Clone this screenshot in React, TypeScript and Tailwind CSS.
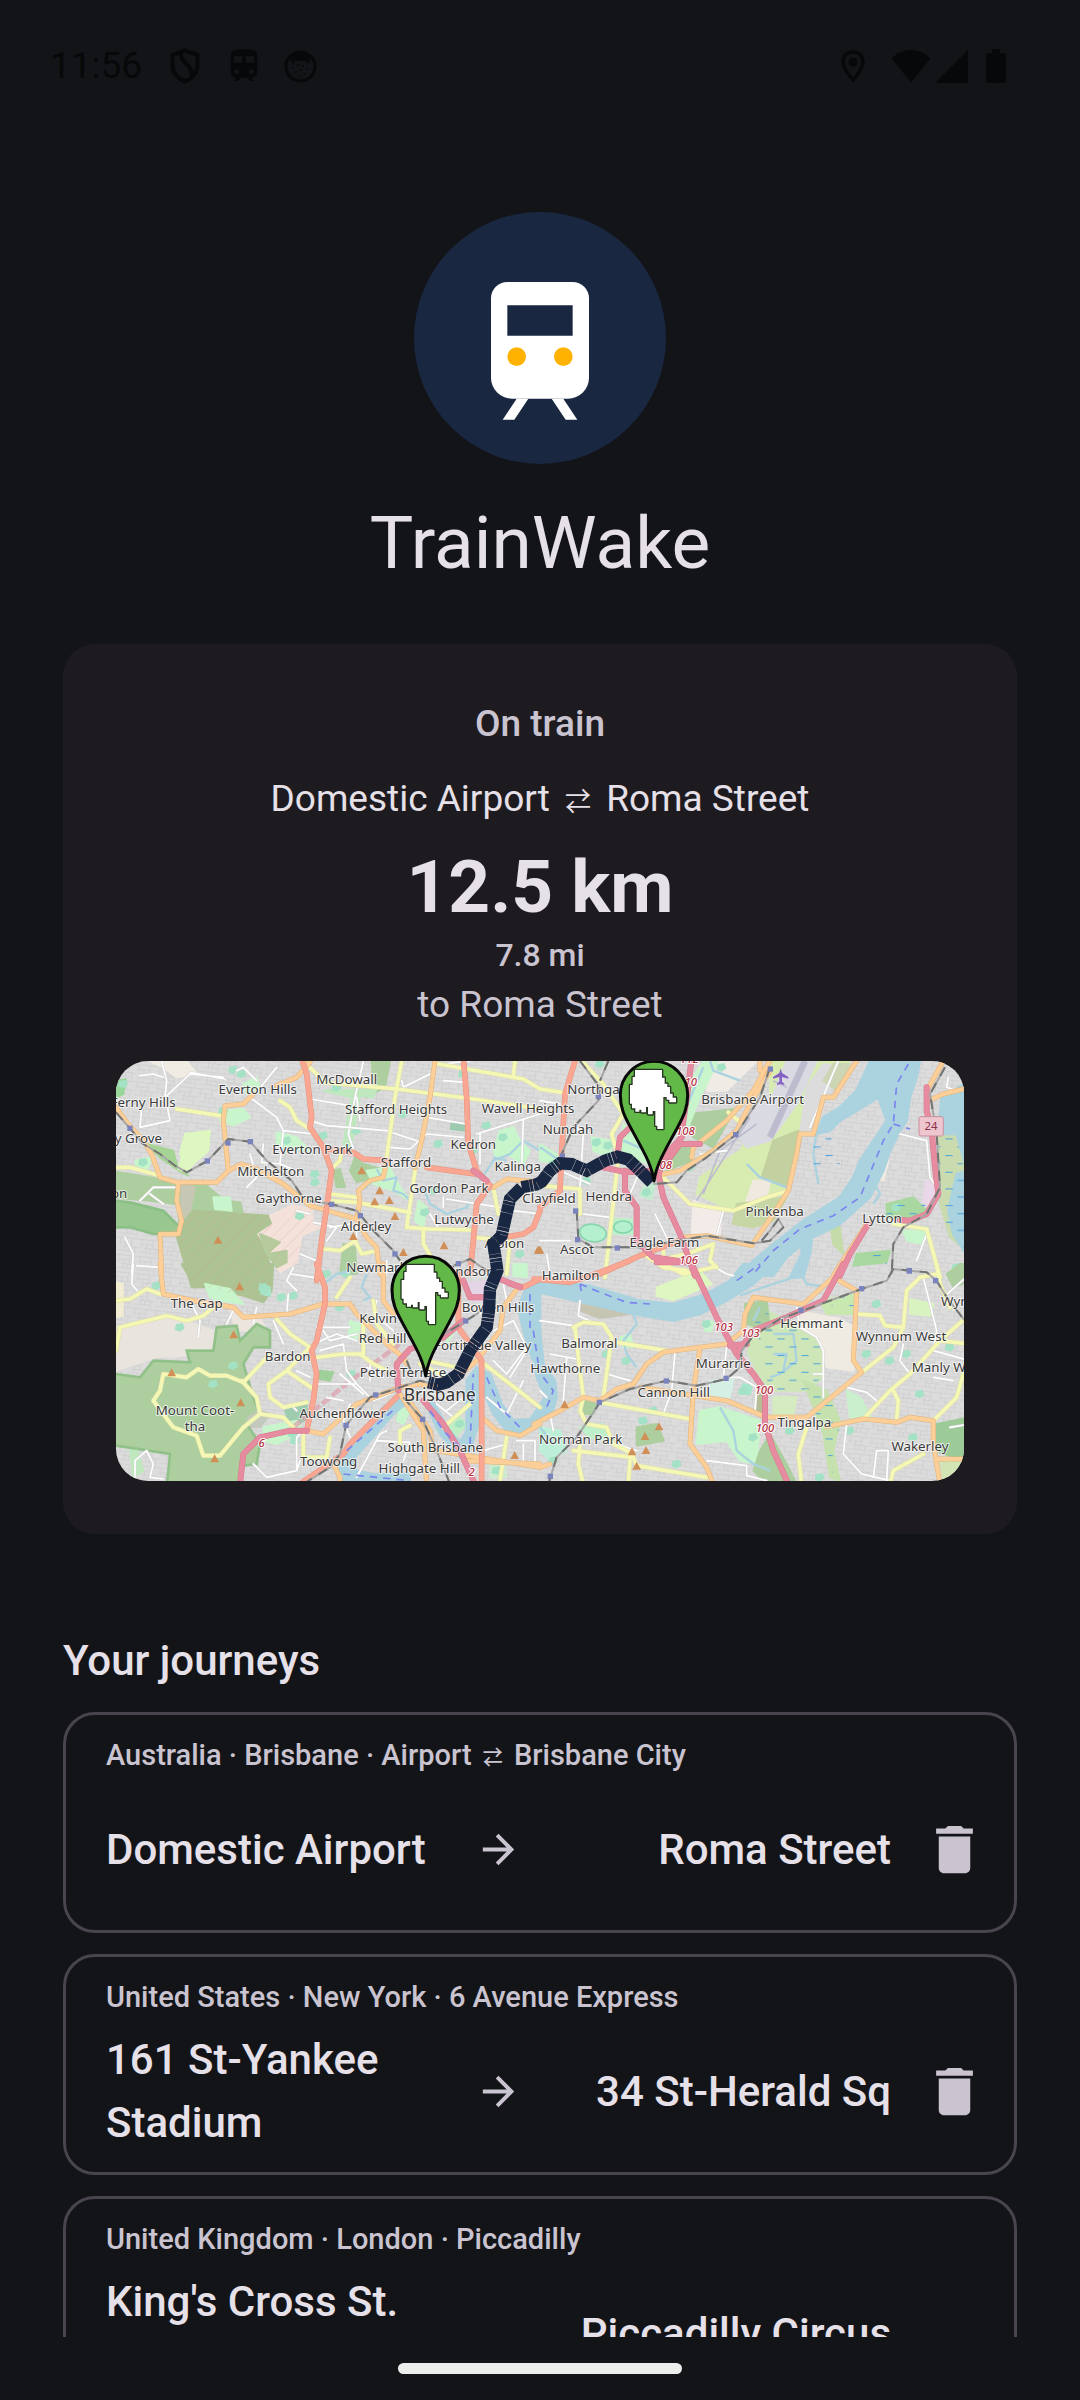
import { MdArrowForward, MdDelete, MdTrain } from "react-icons/md";

type Kind = "motorway" | "trunk" | "primary" | "secondary" | "street";

interface Tile {
  at: string;
  areas: [string, string][];
  water?: string[];
  creeks?: string;
  roads: Record<Kind, string>;
  rail: string;
  ferry?: string;
  stations: [number, number][];
  peaks: [number, number][];
  trees: [number, number][];
  labels: [string, number, number, ("start" | "middle" | "end")?][];
  refs: [string, number, number][];
}

const FOREST = "#adcf9f";
const PARK = "#c8f5cc";
const GOLF = "#def6c0";
const WATER = "#aad3df";

const roadStyle: Record<Kind, { width: number; edge: string; fill: string }> = {
  street: { width: 5, edge: "#d3d3d3", fill: "#ffffff" },
  secondary: { width: 11, edge: "#dadcaa", fill: "#f5f8b5" },
  primary: { width: 12, edge: "#e0b27a", fill: "#fcce98" },
  trunk: { width: 14, edge: "#e6917d", fill: "#f9a792" },
  motorway: { width: 15, edge: "#d4788e", fill: "#e78ba0" },
};

const roadOrder: Kind[] = ["street", "secondary", "primary", "trunk", "motorway"];

const tiles: Tile[] = [
  {
    at: "translate(-18 -21)",
    areas: [
      ["M0 350L150 375L200 395L195 450L120 440L0 430Z", FOREST],
      ["M0 440L60 445L160 470L210 520L195 540L130 540L60 520L0 520Z", "#98c890"],
      ["M18 80L48 76L40 120L18 130Z", "#98d69a"],
      ["M110 270L190 290L205 350L235 365L200 345L150 310Z", "#a5d495"],
      ["M225 240L300 230L295 290L250 330L230 355L205 345L215 310L210 300Z", GOLF],
      ["M215 385L290 395L345 440L390 445L400 480L250 470L240 530L205 530Z", FOREST],
      ["M215 390L255 400L240 470L215 500Z", "#c6c7b4"],
      ["M195 530L250 470L480 485L490 520L445 540L470 590L480 640L480 700L245 700Z", "#aec394"],
      ["M545 455L605 465L610 515L630 520L575 545L560 625L510 655L480 600L445 540L490 510L480 485Z", "#f4e1da"],
      ["M450 540L510 565L470 600L530 590L530 625L500 640L465 590Z", "#b5cb9d"],
      ["M785 21L840 21L825 100L770 130L790 100Z", FOREST],
      ["M735 310L760 330L815 345L800 370L740 385L720 350Z", FOREST],
      ["M670 350L690 345L705 400L680 400Z", FOREST],
      ["M1025 205L1070 210L1065 230L1022 225Z", "#9dcbb0"],
      ["M1170 230L1210 220L1230 260L1260 290L1240 330L1190 300L1160 320L1150 290Z", PARK],
      ["M340 170L400 165L420 190L370 215L330 200Z", PARK],
      ["M500 235L560 250L600 290L540 285L500 270Z", PARK],
      ["M770 350L840 340L870 400L900 440L850 410L790 390Z", PARK],
      ["M700 570L735 580L740 660L690 660Z", FOREST],
      ["M925 440L950 460L940 520L915 500Z", PARK],
      ["M640 110L800 105L790 130L750 125L720 300L700 270L725 130Z", "#bfe8bf"],
      ["M75 320L125 310L110 350L80 345Z", PARK],
      ["M120 21L230 21L260 60L200 70L160 40Z", "#f0ece4"],
      ["M400 90L440 70L450 100L410 120Z", PARK],
      ["M310 430L360 430L365 470L315 465Z", PARK],
    ],
    creeks:
      "M800 345L820 380L860 370L850 410L880 420L900 440M940 400L960 450L1010 480L1070 460L1080 440M1110 380L1150 320L1200 300L1240 260L1290 290M760 405L800 370M1150 310L1190 320",
    roads: {
      street:
        "M155 21L170 80L165 130L240 60L340 70M90 65L130 60L160 70M90 220L95 160M165 120L180 200L90 220M240 55L345 75M380 50L400 40L440 80M455 95L500 40M420 130L500 190L520 230L610 240M600 200L650 215L830 230L920 260M600 135L720 155M840 280L900 285L950 240L1060 250M760 21L735 130L715 240L735 300M875 80L880 100L960 60M1000 80L1070 85M950 190L1070 210M1100 240L1290 180M520 230L510 330L560 350M460 270L455 325L510 330M420 300L440 370L410 400M1080 21L1000 30M560 470L600 480M750 200L740 130M90 440L130 400L200 400M120 420L160 450M45 550L70 600L65 660M80 635L150 640M610 505L680 520L650 560M1240 200L1235 330M1000 430L1000 460M1010 435L1170 460M960 480L990 530M570 600L620 620M740 560L740 500M1110 240L1110 330M1195 500L1210 470L1290 480M720 510L660 520M830 620L830 660",
      secondary:
        "M200 165L330 185M875 21L855 130L830 310M640 85L860 105L1090 135L1290 165M985 30L1240 75L1290 105M580 21L620 60L640 85M510 140L540 160L560 200L595 222M660 420L740 430M650 440L740 445L900 475M640 585L690 590L735 560L755 600L800 590M915 350L890 520L960 525L1080 528M0 340L60 340L150 365M695 285L690 320L665 345M940 530L940 570L970 620L975 670M1215 21L1210 65M1150 400L1165 480M1090 550L1140 555M1200 560L1190 660",
      primary:
        "M975 21L960 130L935 260L915 340M600 25L560 70L500 95M430 120L400 150L345 155L340 200L350 300L355 350M18 160L50 205L100 260L125 300L150 370L200 385L320 385L355 350L395 330L440 345L520 390L600 455L740 495L750 440L745 410L780 380L820 370L830 320M205 390L200 440L215 500L205 540L150 540L155 660M740 495L770 550L800 580L810 660M1150 400L1190 375L1290 385",
      trunk:
        "M570 0L590 60L605 190L600 220L640 280L665 350L650 460L635 560L620 680M1060 10L1070 130L1075 270L1100 350L1140 395L1100 450L1090 560L1080 660M650 285L730 295L760 315L830 320M950 340L1095 360M1195 548L1240 540L1270 520L1290 470",
      motorway: "M1090 350L1130 380",
    },
    rail: "M18 175L60 223L100 270L150 300L195 335L230 355L292 321L355 255L421 263L470 320L545 380L575 425M600 440L665 451L740 470L790 530L850 590L870 620M1020 640L1080 615L1130 650",
    stations: [[60, 223], [354, 267], [421, 263], [292, 321], [665, 451], [751, 485], [855, 600], [1045, 629]],
    peaks: [[324, 557], [755, 349], [809, 409], [794, 442], [838, 438], [855, 486], [730, 546], [880, 594], [1002, 574], [1284, 587]],
    trees: [[40, 90], [395, 60], [370, 48], [570, 486], [615, 360], [616, 385], [640, 245], [970, 410], [985, 270], [1130, 215], [945, 475], [680, 100], [740, 230], [1180, 250], [1090, 290], [530, 260], [340, 170], [100, 325], [880, 180], [1230, 600], [1060, 60]],
    labels: [
      ["Everton Hills", 443, 120], ["McDowall", 710, 91], ["Ferny Hills", 197, 158, "end"], ["Ferny Grove", 156, 266, "end"],
      ["Stafford Heights", 858, 180], ["Wavell Heights", 1254, 178], ["Kedron", 1090, 286], ["Everton Park", 607, 301],
      ["Stafford", 888, 340], ["Kalinga", 1223, 352], ["Mitchelton", 482, 367], ["Gordon Park", 1017, 418],
      ["Gaythorne", 536, 447], ["Lutwyche", 1062, 511], ["Alderley", 768, 530], ["Newmarket", 709, 654, "start"],
      ["Clayfield", 1317, 447], ["Albion", 1183, 583], ["Windsor", 1145, 667, "end"], ["Upper Kedron", 52, 433, "end"],
    ],
    refs: [],
  },
  {
    at: "translate(1272 -21)",
    areas: [
      ["M690 21L930 21L850 110L830 230L770 240L745 410L600 480L470 420L480 370L600 290L690 150Z", "#d8ecb2"],
      ["M850 30L920 40L850 130L840 230L780 235L800 100Z", "#dcdcdc"],
      ["M740 21L830 21L770 150L690 260L620 280L600 250L640 160L700 120Z", "#dadae2"],
      ["M880 30L930 30L890 110L850 80Z", "#cdd6b4"],
      ["M700 260L775 230L750 405L665 370Z", "#c3d0a0"],
      ["M590 450L740 430L700 500L640 520L578 510Z", "#c6d6a4"],
      ["M520 21L650 21L560 110L500 110Z", "#f0ebe4"],
      ["M640 380L690 380L680 430L620 440Z", "#efe9e0"],
      ["M450 180L585 165L520 280L460 250Z", FOREST],
      ["M370 290L450 280L455 320L380 350Z", FOREST],
      ["M490 21L535 21L480 130L440 230L440 100Z", PARK],
      ["M250 210L300 250L330 330L240 300Z", PARK],
      ["M155 250L215 260L210 310L160 290Z", PARK],
      ["M310 400L345 390L335 435L300 425Z", "#c4ead0"],
      ["M460 440L545 470L540 540L455 540Z", "#f3ebe7"],
      ["M0 270L50 300L60 330L0 320Z", PARK],
      ["M220 495L275 495L280 540L220 540Z", "#bdf0c8"],
      ["M1010 330L1045 320L1030 380L1000 370Z", "#f0ebe2"],
      ["M1040 450L1120 430L1160 470L1110 500L1040 490Z", "#a8d8a0"],
      ["M870 510L900 520L910 600L880 570Z", "#c5dba9"],
      ["M950 600L1050 590L1040 625L940 635Z", "#a8d8a0"],
      ["M1090 530L1160 530L1150 570L1100 560Z", PARK],
      ["M1195 250L1250 240L1290 330L1290 600L1230 550L1200 450Z", "#c9dbaf"],
      ["M1160 380L1185 400L1170 460L1150 440Z", "#ead8ea"],
    ],
    water: [
      "M990 21L1140 21L1130 70L1110 130L1100 200L1075 240L1050 290L1030 350L990 430L900 510L800 560L740 610L700 665L600 665L640 620L700 570L790 500L900 430L940 370L960 320L1040 200L1015 130L960 165L900 200L870 230L830 240L850 190L900 160L950 110Z",
      "M1205 130L1290 80L1290 380L1250 240L1195 240Z",
      "M1250 360L1290 350L1290 620L1240 540L1225 470Z",
      "M785 540L815 560L810 600L790 670L750 670L785 600Z",
    ],
    creeks: "M510 21L520 50L600 80M490 40L430 180M620 330L660 370L740 400M830 230L820 300L835 390M1000 380L1020 420L1000 450M250 260L320 290M0 280L60 320",
    roads: {
      street:
        "M895 21L810 220M1080 240L1160 260L1170 370L1190 400M345 480L385 560M130 240L120 400M0 140L60 150M130 480L210 490M110 220L130 240M270 420L300 350M550 470L530 545M1160 540L1130 620M1225 70L1220 100L1250 110M60 350L150 390M0 560L90 560M20 600L30 660M480 300L560 290",
      secondary:
        "M125 21L190 90L250 180L215 240L235 310L225 400L195 670M0 105L65 115M370 370L450 450L580 470L680 430L745 410M0 395L120 405L120 480M1060 510L1160 525L1200 670M370 590L370 615L440 600L520 570L510 620L530 640M565 175L595 200M310 600L370 640L440 650",
      primary:
        "M695 10L640 110L560 200L460 280L455 310M690 50L630 150L590 230L520 290L420 350L370 360M950 21L880 130L850 130L820 240L780 240L770 300L745 410L700 480L635 575L500 545L430 550M1210 21L1160 110M1165 140L1210 120L1290 100M980 510L880 665M660 21L660 50",
      trunk: "M105 21L75 120L65 300L60 410L0 460M180 660L300 605L430 555",
      motorway:
        "M455 10L445 100L430 200L425 250L380 300L355 360L370 430L420 540L465 665M480 270L420 270L390 310M190 340L260 355L330 350M285 205L240 250L230 320M255 350L255 410L290 460L290 560L340 610L440 625M1160 100L1160 170L1175 230L1185 340L1195 420L1160 480L1110 500L1080 498M985 510L930 600L900 665",
    },
    rail: "M120 21L180 100L175 140L100 220L65 300M205 21L180 80M690 40L660 130L590 240L500 310L440 350L410 385L340 390M110 470L115 555L160 580L300 580L500 545L640 568L690 560L730 520L715 495L690 530L665 560M1215 40L1170 120L1190 240L1200 400L1160 480L1090 520L1060 570L1055 660",
    ferry: "M1105 30L1070 90L1060 210L1030 260L960 430L880 485L780 525L700 590L640 660M1060 210L1110 225",
    stations: [[691, 45], [175, 127], [67, 306], [587, 242], [107, 471], [113, 557], [232, 582], [1108, 651]],
    peaks: [[0, 587]],
    trees: [[170, 265], [205, 275], [140, 380], [450, 340], [545, 40], [350, 250], [40, 330], [1070, 460], [1250, 640], [320, 415], [180, 30], [300, 240]],
    labels: [
      ["Northgate", 82, 119, "start"], ["Nundah", 84, 241], ["Brisbane Airport", 638, 151], ["Hendra", 206, 441],
      ["Pinkenba", 704, 486], ["Lytton", 1026, 506], ["Eagle Farm", 373, 578], ["Ascot", 111, 600],
    ],
    refs: [["112", 448, 28], ["110", 443, 97], ["108", 436, 243], ["108", 368, 345], ["106", 446, 630]],
  },
  {
    at: "translate(-18 609)",
    areas: [
      ["M18 190L200 160L310 200L320 270L140 280L18 320Z", "#e9e4dd"],
      ["M360 140L450 160L470 200L380 200Z", "#ebe5de"],
      ["M215 0L490 0L485 80L460 115L400 95L250 60Z", "#aec394"],
      ["M285 60L360 75L400 120L330 110L300 100Z", PARK],
      ["M18 330L90 340L130 290L240 295L230 260L310 260L320 190L380 185L390 230L440 180L480 200L480 250L430 250L400 300L430 400L450 450L410 480L450 540L440 600L400 605L390 670L170 670L180 570L18 545Z", FOREST],
      ["M450 440L480 450L450 490L410 490L415 460Z", "#c3c9bd"],
      ["M525 440L590 420L590 465L545 490Z", "#9fcbaf"],
      ["M460 490L560 470L580 500L500 540L460 530Z", PARK],
      ["M60 560L80 555L100 620L70 640Z", "#bfe8bf"],
      ["M18 55L38 60L38 155L18 160Z", "#f2ecd2"],
      ["M630 320L670 325L660 350L630 345Z", "#9fd09a"],
      ["M720 170L750 180L740 230L715 220Z", PARK],
      ["M450 60L480 70L480 95L455 90Z", "#a5e6cb"],
      ["M1060 60L1130 50L1130 110L1080 110Z", "#e3d5e6"],
      ["M1010 200L1040 190L1010 240Z", PARK],
      ["M980 500L1040 450L1070 480L1020 540Z", "#bfeec4"],
      ["M1210 0L1250 0L1250 40L1210 35Z", PARK],
      ["M870 430L900 440L880 480L860 470Z", PARK],
      ["M1140 590L1180 590L1190 640L1140 640Z", "#cdeccf"],
    ],
    water: [
      "M690 670L690 580L820 430L870 395L885 420L850 450L735 580L725 615L790 632L900 630L900 670Z",
      "M945 415L975 420L1010 490L1050 535L1070 500L1070 350L1100 310L1140 330L1175 420L1210 470L1260 465L1290 430L1290 470L1240 505L1190 500L1150 450L1115 370L1105 480L1080 560L1050 580L990 510Z",
      "M1245 80L1290 50L1290 320L1265 280L1240 200L1225 130Z",
    ],
    creeks: "M770 30L755 70L780 100L760 110M640 60L680 30L720 21M1070 490L1080 530",
    roads: {
      street:
        "M70 0L65 60L90 90M240 110L270 170L265 220M350 180L370 140M440 130L430 180M545 30L610 40M560 80L530 50L550 10M535 90L530 150M610 240L680 210L740 230M630 260L700 240L710 320L740 360M620 190L720 190M640 200L660 230L740 210M560 320L600 340M620 360L740 360L790 410L840 390M690 330L760 390M780 290L780 350M820 340L770 310M540 420L560 440M430 600L470 640L560 620L570 590M580 500L560 520L560 620M740 640L810 510L830 500M800 530L900 535L880 590M720 420L700 470L720 520M650 400L700 410M1180 60L1190 110M1150 200L1210 170L1250 250L1190 330L1150 290M1200 340L1250 260M1010 440L1060 400M1030 460L980 420M1130 400L1190 450L1240 350M1120 560L1190 540M1220 530L1275 530L1275 610M75 640L75 590L110 560L130 600L120 640L160 645M1240 540L1240 590M490 170L520 240M800 110L790 150L850 200M1110 150L1150 60",
      secondary:
        "M18 110L60 105L110 75L150 90M18 260L30 190L170 155L230 170L280 155L310 130M160 330L230 340L265 315L300 335L350 335L400 355M160 330L150 380L130 410L190 490L260 515L280 575L330 575L400 490L450 450L520 460L550 490M500 165L540 210L600 250L530 320L475 360L480 400L520 430L590 415M530 320L610 375M620 280L700 270L750 270L790 300L830 320M720 40L680 100M580 510L580 580L650 580L660 520M405 350L480 270M395 350L440 400L450 450M1110 290L1290 430M900 485L870 500L870 540M1190 520L1170 650M950 290L1040 310M930 300L1030 350M760 180L760 270M790 110L800 180L850 240M1080 420L1000 490",
      primary:
        "M150 0L160 90L250 110L370 130L400 160L540 150L640 120L720 120L740 150L830 240L880 280L890 300M590 500L640 510L740 420L870 370L930 360L1000 370M820 0L820 110L850 150M870 390L940 500L950 660M890 400L960 500L970 560M1225 70L1180 130L1170 200L1100 290L1040 340M1115 460L1160 500L1230 515L1290 480M980 560L1290 610M1060 590L1290 600M670 600L690 640L690 670",
      trunk:
        "M620 0L645 70L645 120L620 230L605 260L620 330L610 410L590 500M570 660L700 570L720 540L860 400M1045 30L1045 190L1115 290L1115 650M1200 60L1240 70L1290 45",
      motorway:
        "M390 660L400 570L450 520L540 500L590 500M940 410L1000 480L1050 560L1090 650M865 380L860 300L900 255L1000 220L1060 170M1060 50L1080 100L1120 100M1170 45L1230 70",
    },
    rail: "M580 660L660 610L690 570L708 484L780 400L870 370L930 350L970 360M880 400L938 466L980 560L1020 660M930 255L1067 171L1130 130M890 290L910 340",
    ferry: "M710 560L860 430M700 630L900 650M960 440L1000 500L1050 550M1080 540L1090 330M1130 340L1170 430L1230 490M1260 90L1260 200M1270 200L1285 300",
    stations: [[708, 484], [797, 393], [938, 466], [1067, 171]],
    peaks: [[389, 67], [371, 211], [185, 325], [392, 415], [314, 583], [1214, 573]],
    trees: [[140, 65], [460, 70], [515, 100], [550, 95], [370, 305], [310, 360], [550, 510], [555, 530], [690, 130], [725, 330], [1050, 480], [980, 190], [710, 30], [650, 30], [210, 190], [1160, 620]],
    labels: [
      ["The Gap", 260, 131], ["Bardon", 533, 290], ["Kelvin Grove", 748, 178, "start"], ["Red Hill", 818, 237],
      ["Petrie Terrace", 879, 339], ["Fortitude Valley", 1118, 258], ["Bowen Hills", 1164, 144], ["Mount Coot-", 255, 453],
      ["tha", 255, 502], ["Auchenflower", 698, 463], ["Toowong", 656, 605], ["South Brisbane", 976, 563], ["Highgate Hill", 928, 628],
    ],
    refs: [["6", 455, 549], ["2", 1085, 637]],
  },
  {
    at: "translate(1272 609)",
    areas: [
      ["M130 90L200 110L270 150L180 162L120 140Z", "#c6c5b2"],
      ["M350 70L480 20L515 60L400 108L350 95Z", GOLF],
      ["M640 120L760 180L850 240L850 340L800 380L690 380L650 320L625 270Z", "#cfe6b8"],
      ["M615 120L680 110L690 200L620 180Z", FOREST],
      ["M770 140L900 165L945 190L940 320L860 310L840 220L780 190Z", "#f0ebe2"],
      ["M840 110L940 90L940 150L860 150Z", "#c9e8b0"],
      ["M480 440L540 430L660 470L650 600L600 590L560 530L470 540Z", PARK],
      ["M650 380L675 400L670 450L645 440Z", "#b6bd94"],
      ["M510 350L580 345L570 400L510 395Z", "#d5efe5"],
      ["M690 510L740 600L770 660L680 660L640 620L660 560Z", FOREST],
      ["M700 400L770 400L760 450L700 450Z", "#d5ecc0"],
      ["M290 490L350 480L372 530L290 545Z", FOREST],
      ["M130 410L170 420L160 450L130 450Z", FOREST],
      ["M1190 480L1290 460L1290 600L1190 560Z", "#9ccb98"],
      ["M1200 590L1290 590L1290 660L1210 650Z", "#d2e4b4"],
      ["M790 350L860 380L900 470L880 560L900 650L870 640L850 510Z", "#c5e2ae"],
      ["M1110 105L1180 120L1170 155L1110 150Z", "#d8f3c0"],
      ["M1220 30L1260 0L1290 0L1290 50L1240 70Z", FOREST],
      ["M240 220L270 210L280 250L250 250Z", PARK],
      ["M0 490L60 500L80 560L30 590L0 560Z", "#bdeed8"],
      ["M920 380L960 400L1000 470L930 460Z", "#caefcd"],
      ["M500 170L520 175L515 200L495 200Z", PARK],
      ["M610 360L635 365L630 390L600 390Z", "#a5e6cb"],
      ["M120 490L190 480L210 530L150 520Z", "#bdf0c8"],
    ],
    water: [
      "M0 50L150 65L300 110L400 120L500 90L570 50L610 0L710 0L640 60L560 110L480 150L400 170L280 150L130 115L0 85Z",
      "M-18 190L0 200L10 300L45 350L50 400L35 450L0 470L-18 450L15 400L-10 340Z",
    ],
    creeks: "M800 0L760 40L640 80L600 95M280 150L290 180L250 230L260 270L290 310M700 210L760 210L770 290L720 330L690 340M700 270L740 270L730 320M540 430L580 500L590 560L640 600L690 620M660 130L640 170M0 490L40 540M780 20L800 60L860 70",
    roads: {
      street:
        "M405 265L395 380L370 450M0 170L100 185M560 250L550 340L600 340L650 370L645 440M770 130L780 190L830 220L850 260L850 400M920 480L910 570L965 630L1050 650M500 590L620 605L620 635L680 650M1150 40L1190 200L1180 260L1290 290M920 370L980 385L1010 410M30 270L110 285M120 110L115 155L170 180M70 410L80 280M200 330L270 350M1090 240L1080 290L1110 330M1010 560L1045 560L1040 650M1010 560L1000 640M1230 490L1290 480M0 380L20 400M1210 100L1290 30M30 450L40 500M200 530L290 560M820 330L850 330M1180 340L1240 350M525 10L560 30L580 35",
      secondary:
        "M100 190L130 175L190 180L215 220L190 400M105 190L120 320L130 400L120 440L140 480L200 490L220 540L280 570M230 235L380 260M180 415L450 465M100 560L280 580L290 605L500 640M120 540L115 600L130 660M270 590L265 660M800 490L775 570L785 660M950 150L1020 155L1035 185L1090 190L1100 80L1140 40L1190 30M1090 190L1060 250L965 325M970 465L1050 380L1110 330L1200 230L1290 150M1060 380L1075 410L1070 470M1180 470L1250 400L1270 330M1050 660L1060 620L1150 570M1190 0L1200 60L1230 130M370 0L430 30L520 10M1200 230L1290 240",
      primary:
        "M-18 480L60 440L130 400L180 410L230 375L280 360L320 300L370 265L480 250L560 240L610 200L615 150L640 100L790 120L880 40L900 10M880 40L950 80L940 290L965 325L800 460L680 460L560 410L300 370M480 250L460 380L450 540L500 610L520 660M860 488L970 465L1070 475L1110 460L1180 470L1180 540L1200 660M1190 585L1290 585M0 610L30 600",
      trunk: "M-18 45L90 55L180 25L270 -10",
      motorway: "M455 0L530 160L590 270L640 330L675 380L675 480L700 560L745 660M590 270L640 200L740 160L850 110L910 0M570 245L620 240M350 -5L440 -5",
    },
    rail: "M25 660L50 580L110 520L150 460L180 415L270 375L380 350L470 365L560 345L600 310L605 260L640 215L720 165L965 75L1040 50L1060 15L1110 20L1160 25L1190 50L1220 100L1290 190",
    ferry: "M120 60L180 85L260 115L330 120M590 50L660 0M10 340L40 380L20 430M120 60L125 90",
    stations: [[1108, 20], [1187, 50], [965, 74], [783, 139], [558, 343], [379, 351], [178, 415], [31, 637]],
    peaks: [[74, 421], [357, 487], [315, 516], [276, 562], [318, 558], [290, 605]],
    trees: [[610, 380], [750, 500], [200, 270], [260, 290], [640, 520], [340, 440], [1100, 270], [1050, 290], [1140, 390], [980, 270], [1120, 520], [500, 180], [40, 590], [930, 500], [1010, 120], [1230, 250], [840, 640], [410, 600], [310, 470]],
    labels: [
      ["Hamilton", 92, 47], ["Balmoral", 148, 253], ["Murarrie", 550, 313], ["Cannon Hill", 401, 400], ["Norman Park", 122, 541],
      ["Tingalpa", 793, 490], ["Wakerley", 1140, 561], ["Hemmant", 815, 191], ["Wynnum West", 1083, 231],
      ["Manly West", 1115, 325, "start"], ["Wynnum", 1203, 126, "start"], ["Hawthorne", 181, 328, "end"],
    ],
    refs: [["103", 551, 202], ["103", 631, 219], ["100", 672, 391], ["100", 675, 504]],
  },
];

const ROUTE =
  "M1607 364L1562 319L1537 296L1504 287L1467 299L1412 329L1367 309L1332 307L1302 329L1277 362L1262 370L1217 379L1182 414L1167 479L1157 524L1132 549L1140 599L1144 629L1122 684L1119 749L1112 799L1062 869L1027 939L992 964L967 971L937 964";

const MARKERS = ["translate(1614 360)", "translate(929 945)"];

function StopMarker({ at }: { at: string }) {
  return (
    <g transform={at}>
      <path
        d="M0 0C-8 -54 -36 -96 -70 -160C-90 -196 -101 -220 -101 -258A101 101 0 1 1 101 -258C101 -220 90 -196 70 -160C36 -96 8 -54 0 0Z"
        fill="#62b947"
        stroke="#080808"
        strokeWidth="9"
        strokeLinejoin="round"
      />
      <path
        d="M-57 -333H24V-310H32V-292H40V-282H48V-262H56V-250H66V-236H46V-244H38V-252H28V-156H10V-166H4V-210H-4V-200H-18V-222H-24V-206H-38V-214H-44V-208H-56V-218H-66V-232H-72V-288H-64V-312H-57Z"
        fill="#fff"
        stroke="#26351f"
        strokeWidth="8"
        strokeLinejoin="round"
        paintOrder="stroke"
      />
    </g>
  );
}

function JourneyMap() {
  return (
    <svg
      viewBox="0 0 2544 1260"
      role="img"
      aria-label="Map of the journey from Domestic Airport to Roma Street"
      className="mt-7 block w-full rounded-[32px] font-['Noto_Sans',sans-serif]"
    >
      <defs>
        <pattern id="blocks" width="64" height="52" patternUnits="userSpaceOnUse" patternTransform="rotate(6)">
          <path
            d="M0 4H64M0 18H40M14 30H64M0 43H52M6 4V30M22 18V43M40 4V30M52 30V56M33 30V43"
            stroke="#cbcbcb"
            strokeWidth="2"
            fill="none"
          />
        </pattern>
        <pattern id="hatch" width="26" height="26" patternUnits="userSpaceOnUse" patternTransform="rotate(45)">
          <path d="M0 0V26" stroke="#cf9f83" strokeWidth="3" />
        </pattern>
        <pattern id="marsh" width="72" height="50" patternUnits="userSpaceOnUse">
          <path d="M4 8H26M40 34H62" stroke="#4a9fe0" strokeWidth="3" />
        </pattern>
      </defs>

      <rect width="2544" height="1260" fill="#dddcdc" />
      <rect width="2544" height="1260" fill="url(#blocks)" />

      {tiles.map((tile) => (
        <g key={tile.at} transform={tile.at}>
          {tile.areas.map(([d, fill]) => (
            <path key={d} d={d} fill={fill} stroke={fill} strokeWidth="6" strokeLinejoin="round" />
          ))}
          {tile.trees.map(([x, y]) => (
            <path key={`${x}-${y}`} d={`M${x - 12} ${y - 9}l20 -4l6 16l-14 10l-16 -6z`} fill="#a3e2c4" />
          ))}
          {tile.water?.map((d) => <path key={d} d={d} fill={WATER} stroke={WATER} strokeWidth="8" strokeLinejoin="round" />)}
          {tile.creeks && <path d={tile.creeks} fill="none" stroke={WATER} strokeWidth="7" strokeLinejoin="round" />}
        </g>
      ))}

      <path d="M177 509L232 449L462 464L472 499L427 519L462 609L467 690L442 724L232 669Z" fill="url(#hatch)" opacity="0.5" />
      <path d="M527 434L587 444L592 494L612 499L557 524L542 604L492 634L427 519L472 489Z" fill="url(#hatch)" opacity="0.4" />
      <path
        d="M0 939L72 949L112 899L222 904L212 869L292 869L302 799L362 794L372 839L422 789L462 809L462 859L412 859L382 909L412 1009L432 1059L392 1089L432 1149L422 1209L382 1214L372 1280M152 1280L162 1179L0 1154M0 419L42 424L142 449L192 499L177 519L112 519L42 499L0 499"
        fill="none"
        stroke="#84ba80"
        strokeWidth="8"
        opacity="0.7"
      />
      <path d="M2467 229H2522L2544 320V560L2502 520L2472 430ZM2092 229L2142 219L2172 309L2082 319ZM1910 740L2040 789L2122 849L2122 949L2060 990L1960 990ZM2062 950L2132 990L2172 1080L2150 1240L2122 1120ZM2312 420L2432 430L2382 480L2312 470ZM2242 580L2322 570L2312 610ZM2112 719L2212 700V760Z" fill="url(#marsh)" />
      <path d="M2067 0L1962 229" stroke="#bcbcce" strokeWidth="20" />
      <path d="M1742 419L1902 169M1762 399L1812 269L1922 189M1972 59L2012 79" fill="none" stroke="#bcbcce" strokeWidth="5" />
      <g fill="#b4f0cd" stroke="#86d5ae" strokeWidth="5">
        <ellipse cx="1431" cy="516" rx="40" ry="26" transform="rotate(8 1431 516)" />
        <ellipse cx="1521" cy="498" rx="28" ry="18" />
      </g>
      <path d="M530 1100L690 970L850 850" fill="none" stroke="#dd9fab" strokeWidth="14" strokeDasharray="30 8" opacity="0.7" />

      {roadOrder.map((kind) => (
        <g key={kind} fill="none" strokeLinejoin="round" strokeLinecap="round">
          {tiles.map((tile) => (
            <path key={`${tile.at}-edge`} transform={tile.at} d={tile.roads[kind]} stroke={roadStyle[kind].edge} strokeWidth={roadStyle[kind].width + 3} />
          ))}
          {tiles.map((tile) => (
            <path key={tile.at} transform={tile.at} d={tile.roads[kind]} stroke={roadStyle[kind].fill} strokeWidth={roadStyle[kind].width} />
          ))}
        </g>
      ))}

      {tiles.map((tile) => (
        <g key={tile.at} transform={tile.at}>
          <path d={tile.rail} fill="none" stroke="#a5a6a5" strokeWidth="6" strokeLinejoin="round" />
          <path d={tile.rail} fill="none" stroke="#737573" strokeWidth="6" strokeDasharray="30 24" strokeLinejoin="round" />
          {tile.ferry && <path d={tile.ferry} fill="none" stroke="#7b85ee" strokeWidth="5" strokeDasharray="22 18" />}
          {tile.stations.map(([x, y]) => (
            <rect key={`${x}-${y}`} x={x - 8} y={y - 8} width="16" height="16" fill="#7a83bb" />
          ))}
          {tile.peaks.map(([x, y]) => (
            <path key={`${x}-${y}`} d={`M${x} ${y - 12}l13 24h-26z`} fill="#d08f56" />
          ))}
        </g>
      ))}

      <path d="M1994 22l4 14l19 12v5l-19 -5v14l7 6v4l-11 -3l-11 3v-4l7 -6v-14l-19 5v-5l19 -12z" fill="#8461c4" />

      {tiles.map((tile) => (
        <g key={tile.at} transform={tile.at} paintOrder="stroke" strokeLinejoin="round">
          {tile.labels.map(([name, x, y, anchor = "middle"]) => (
            <text key={name} x={x} y={y} textAnchor={anchor} fontSize="40" fill="#3a3a3a" stroke="#fff" strokeOpacity="0.7" strokeWidth="6">
              {name}
            </text>
          ))}
          {tile.refs.map(([name, x, y]) => (
            <text key={`${x}-${y}`} x={x} y={y} textAnchor="middle" fontSize="34" fontStyle="italic" fontWeight="500" fill="#b5303f" stroke="#fff" strokeWidth="6">
              {name}
            </text>
          ))}
        </g>
      ))}
      <text x="971" y="1021" textAnchor="middle" fontSize="52" fill="#333" stroke="#fff" strokeOpacity="0.7" strokeWidth="6" paintOrder="stroke">
        Brisbane
      </text>
      <rect x="2409" y="167" width="73" height="58" rx="6" fill="#eec6cf" stroke="#c98e9c" strokeWidth="3" />
      <text x="2445" y="208" textAnchor="middle" fontSize="34" fill="#8a3049">
        24
      </text>

      <path d={ROUTE} fill="none" stroke="#1a2742" strokeWidth="37" strokeDasharray="43 1 11 2 9 1 24 1" />
      {MARKERS.map((at) => (
        <StopMarker key={at} at={at} />
      ))}
    </svg>
  );
}

function StatusBar() {
  return (
    <header className="flex h-32 shrink-0 items-center justify-between pt-1 pr-[74px] pl-[50px] text-[#07080a]">
      <div className="flex items-center">
        <span className="text-[37px] leading-[44px]">11:56</span>
        <svg viewBox="0 0 30 36" className="ml-7 h-9 w-[30px]" fill="none" stroke="currentColor" strokeWidth="4">
          <path d="M15 2.500L27.500 7V17C27.500 25 22 31 15 33.500C8 31 2.500 25 2.500 17V7Z" strokeLinejoin="round" />
          <path d="M11 4C9 15 23 16 22 28" />
        </svg>
        <MdTrain className="ml-6 size-10" />
        <svg viewBox="0 0 33 33" className="ml-5 size-[33px]">
          <circle cx="16.500" cy="16.500" r="14.500" fill="none" stroke="currentColor" strokeWidth="3" />
          <path d="M6 9C11 1 22 1 27 9L24 14L22 11H11L9 14Z" fill="currentColor" />
          <path d="M8 18h2M13 15h2M18 16h2M22 19h2M11 22h2M16 20h2M20 24h2M15 26h2" stroke="currentColor" strokeWidth="1.500" />
        </svg>
      </div>
      <div className="flex items-center">
        <svg viewBox="0 0 24 33" className="mr-[26px] h-[33px] w-6">
          <path d="M12 2C6 2 2 6 2 12C2 19 12 30 12 30S22 19 22 12C22 6 18 2 12 2Z" fill="none" stroke="currentColor" strokeWidth="3.500" />
          <circle cx="12" cy="12" r="4.500" fill="currentColor" />
        </svg>
        <svg viewBox="0 0 40 34" className="mr-1 h-[34px] w-10" fill="currentColor">
          <path d="M20 33.500L.500 9.500C11 -2 29 -2 39.500 9.500Z" />
        </svg>
        <svg viewBox="0 0 33 33" className="mr-[18px] size-[33px]" fill="currentColor">
          <path d="M33 0V33H0Z" />
        </svg>
        <svg viewBox="0 0 20 34" className="h-[34px] w-5" fill="currentColor">
          <path d="M6 0h8v4h4a2 2 0 0 1 2 2v26a2 2 0 0 1-2 2H2a2 2 0 0 1-2-2V6a2 2 0 0 1 2-2h4Z" />
        </svg>
      </div>
    </header>
  );
}

function Logo() {
  return (
    <svg viewBox="0 0 108 108" className="size-[252px]" aria-hidden="true">
      <circle cx="54" cy="54" r="54" fill="#1a2740" />
      <path d="M40 30H68A7 7 0 0 1 75 37V71A9 9 0 0 1 66 80H42A9 9 0 0 1 33 71V37A7 7 0 0 1 40 30Z" fill="#fff" />
      <path d="M40 40H68V53H40Z" fill="#1a2740" />
      <circle cx="44" cy="62" r="4" fill="#ffb300" />
      <circle cx="64" cy="62" r="4" fill="#ffb300" />
      <path d="M44 80H49L43 89H38ZM59 80H64L70 89H65Z" fill="#fff" />
    </svg>
  );
}

const journeys = [
  { line: ["Australia · Brisbane · Airport ", "⇄", " Brisbane City"], from: "Domestic Airport", to: "Roma Street", ready: true },
  { line: ["United States · New York · 6 Avenue Express"], from: "161 St-Yankee Stadium", to: "34 St-Herald Sq", ready: true },
  { line: ["United Kingdom · London · Piccadilly"], from: "King's Cross St. Pancras", to: "Piccadilly Circus", ready: false },
];

export default function App() {
  return (
    <div className="flex h-screen flex-col overflow-hidden bg-[#131418] font-[Roboto,sans-serif] text-[#e6e0e9]">
      <StatusBar />

      <main className="min-h-0 flex-1 overflow-hidden px-[63px] pt-[84px]">
        <div className="flex flex-col items-center">
          <Logo />
          <h1 className="mt-8 text-[73px] leading-[94px]">TrainWake</h1>
        </div>

        <section className="mt-[54px] flex flex-col items-center rounded-[32px] bg-[#1e1b20] px-[53px] pt-[54px] pb-[53px] text-center">
          <p className="text-[37px] leading-[52px] font-medium text-[#cac4d0]">On train</p>
          <p className="mt-[18px] text-[37px] leading-[62px]">
            Domestic Airport{" "}
            <span className="mx-1.5 font-['Noto_Sans_CJK_JP',sans-serif] text-[26px] leading-none">⇄</span> Roma Street
          </p>
          <p className="mt-2.5 text-[73px] leading-[94px] font-bold">12.5 km</p>
          <p className="text-[32px] leading-[42px] font-medium text-[#cac4d0]">7.8 mi</p>
          <p className="text-[37px] leading-[57px] text-[#cac4d0]">to Roma Street</p>
          <JourneyMap />
        </section>

        <h2 className="mt-[95px] text-[42px] leading-[63px] font-medium">Your journeys</h2>
        <ul className="mt-5 flex flex-col gap-[21px]">
          {journeys.map((journey) => (
            <li key={journey.from} className="rounded-[32px] border-3 border-[#49454f] pt-[19px] pr-7 pb-[18px] pl-10">
              <p className="text-[29px] leading-[42px] font-medium text-[#cac4d0]">
                {journey.line.map((part) => (
                  <span
                    key={part}
                    className={part === "⇄" ? "mx-1 font-['Noto_Sans_CJK_JP',sans-serif] text-[20px] leading-none" : ""}
                  >
                    {part}
                  </span>
                ))}
              </p>
              <div className="mt-2.5 flex min-h-[126px] items-center">
                <p className="flex-1 text-[42px] leading-[63px] font-medium">{journey.from}</p>
                <MdArrowForward className={`mx-5 size-[47px] shrink-0 text-[#cac4d0] ${journey.ready ? "" : "invisible"}`} />
                <p className="flex-1 text-right text-[42px] leading-[63px] font-medium">{journey.to}</p>
                <button
                  type="button"
                  aria-label={`Delete ${journey.from} to ${journey.to}`}
                  className={`ml-8 shrink-0 text-[#cac4d0] ${journey.ready ? "" : "invisible"}`}
                >
                  <MdDelete className="size-[63px]" />
                </button>
              </div>
            </li>
          ))}
        </ul>
      </main>

      <footer className="flex h-[63px] shrink-0 items-center justify-center">
        <div className="h-[11px] w-[284px] rounded-full bg-[#ebeeec]" />
      </footer>
    </div>
  );
}
